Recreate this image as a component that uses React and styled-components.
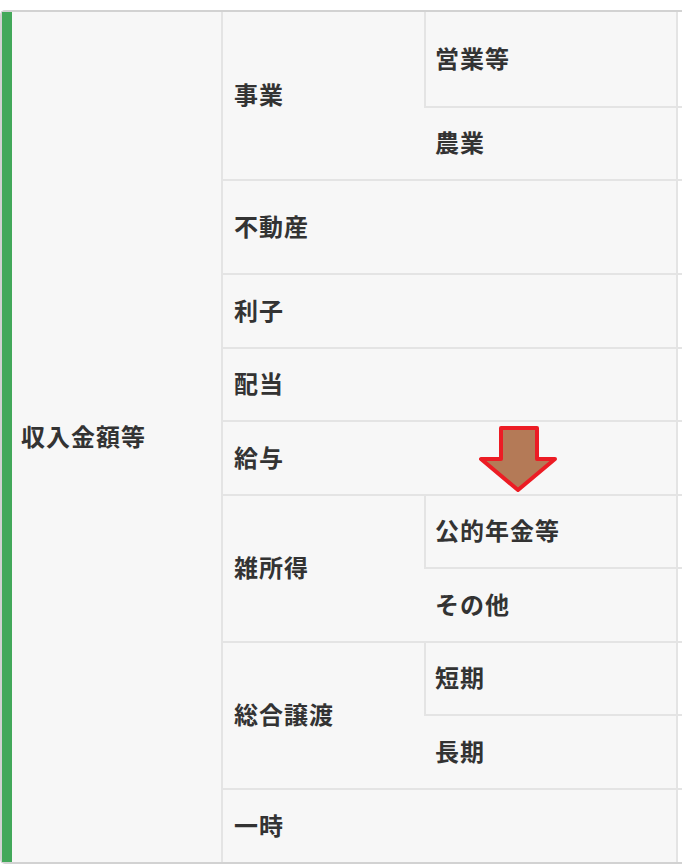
import React from 'react'
import styled, { createGlobalStyle } from 'styled-components'

const GlobalStyle = createGlobalStyle`
  *, *::before, *::after {
    box-sizing: border-box;
  }
  html, body {
    margin: 0;
    padding: 0;
    background: #fff;
    overflow: hidden;
  }
  body {
    font-family: "Noto Sans CJK JP", "Noto Sans", sans-serif;
    color: #333;
  }
`

const Table = styled.div`
  position: relative;
  margin-top: 10px;
  width: 760px;
  display: flex;
  background: #f7f7f7;
  border-top: 2px solid #d2d2d2;
  border-bottom: 2px solid #d2d2d2;
  border-left: 2px solid #d2d2d2;
  border-radius: 5px 0 0 5px;
`

const Category = styled.div`
  width: 221px;
  flex: none;
  display: flex;
  align-items: center;
  padding-left: 9px;
  border-left: 10px solid #43a85a;
  border-right: 2px solid #e4e4e4;
`

const Label = styled.span`
  font-size: 24px;
  font-weight: 700;
  letter-spacing: 1px;
  line-height: 1;
  margin-top: -3px;
`

const Body = styled.div`
  flex: 1;
  display: flex;
  flex-direction: column;
`

const Group = styled.div`
  display: flex;
  border-bottom: 2px solid #e4e4e4;
  &:last-child {
    border-bottom: none;
  }
`

const GroupLabel = styled.div`
  width: ${props => (props.wide ? 453 : 201)}px;
  flex: none;
  display: flex;
  align-items: center;
  padding-left: 11px;
  height: ${props => (props.h ? props.h + 'px' : 'auto')};
`

const Leaves = styled.div`
  flex: 1;
  display: flex;
  flex-direction: column;
`

const Leaf = styled.div`
  display: flex;
  height: ${props => props.h}px;
  border-bottom: ${props => (props.boxed ? '2px solid #e4e4e4' : 'none')};
`

const LeafLabel = styled.div`
  width: 252px;
  flex: none;
  display: flex;
  align-items: center;
  padding-left: ${props => (props.boxed ? 9 : 11)}px;
  border-left: ${props => (props.boxed ? '2px solid #e4e4e4' : 'none')};
`

const Value = styled.div`
  flex: 1;
  background: #fff;
  border-left: 2px solid #e4e4e4;
`

const Arrow = styled.svg`
  position: absolute;
  left: 474px;
  top: 412px;
  width: 84px;
  height: 72px;
`

const groups = [
  { label: '事業', leaves: [{ label: '営業等', h: 96 }, { label: '農業', h: 71 }] },
  { label: '不動産', h: 94 },
  { label: '利子', h: 74 },
  { label: '配当', h: 73 },
  { label: '給与', h: 74 },
  { label: '雑所得', leaves: [{ label: '公的年金等', h: 73 }, { label: 'その他', h: 72 }] },
  { label: '総合譲渡', leaves: [{ label: '短期', h: 73 }, { label: '長期', h: 72 }] },
  { label: '一時', h: 74 }
]

const renderGroup = (group, index) => {
  if (!group.leaves) {
    return (
      <Group key={index}>
        <GroupLabel wide h={group.h - 2}>
          <Label>{group.label}</Label>
        </GroupLabel>
        <Value />
      </Group>
    )
  }
  return (
    <Group key={index}>
      <GroupLabel>
        <Label>{group.label}</Label>
      </GroupLabel>
      <Leaves>
        {group.leaves.map((leaf, i) => {
          const boxed = i === 0
          return (
            <Leaf key={i} h={leaf.h} boxed={boxed}>
              <LeafLabel boxed={boxed}>
                <Label>{leaf.label}</Label>
              </LeafLabel>
              <Value />
            </Leaf>
          )
        })}
      </Leaves>
    </Group>
  )
}

export default function App() {
  return (
    <>
      <GlobalStyle />
      <Table>
        <Category>
          <Label>収入金額等</Label>
        </Category>
        <Body>{groups.map(renderGroup)}</Body>
        <Arrow viewBox="0 0 84 72">
          <polygon
            points="25,4 61,4 61,35 79,35 42,66 5,35 25,35"
            fill="#b47a57"
            stroke="#ec1c24"
            strokeWidth="4"
            strokeLinejoin="round"
          />
        </Arrow>
      </Table>
    </>
  )
}
